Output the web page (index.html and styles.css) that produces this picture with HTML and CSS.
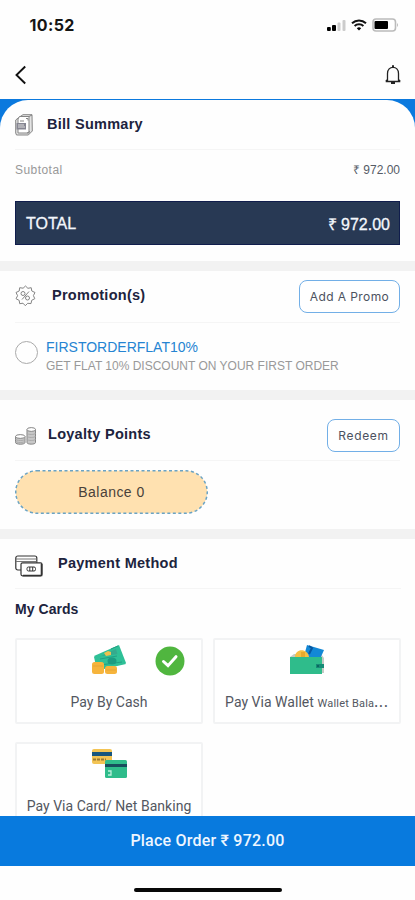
FILE: index.html
```html
<!DOCTYPE html>
<html lang="en">
<head>
<meta charset="utf-8">
<title>Bill Summary</title>
<link rel="stylesheet" href="styles.css">
</head>
<body>
<div class="screen">
  <header class="status">
    <span class="time">10:52</span>
    <div class="status-icons">
      <svg width="19" height="13" viewBox="0 0 19 13"><rect x="0" y="8" width="3.8" height="4" rx="1"/><rect x="5" y="6" width="4" height="6" rx="1"/><rect class="dim" x="10.5" y="3.500" width="3" height="8.500" rx="1"/><rect class="dim" x="15.500" y="1" width="3" height="11" rx="1"/></svg>
      <svg class="wifi" width="16" height="12" viewBox="0 0 16 12"><path d="M1 4.200C5 .5 11 .5 15 4.200M3.600 7C6 4.700 10 4.700 12.400 7" fill="none" stroke="#111" stroke-width="2"/><path d="M5.800 9.200Q8 7.400 10.200 9.200L8 11.500Z"/></svg>
      <svg class="battery" width="27" height="14" viewBox="0 0 27 14"><rect x="1" y="1" width="22.500" height="12" rx="3" fill="#fff" stroke="#bbb" stroke-width="1.600"/><rect x="2.500" y="3" width="13.500" height="8" rx="1"/><path d="M25 5q2 2 0 4z" fill="#bbb"/></svg>
    </div>
  </header>
  <nav class="nav">
    <svg width="12" height="20" viewBox="0 0 12 20"><path d="M10.200 1.500L1.500 10l8.700 8.500" fill="none" stroke="#111" stroke-width="1.900"/></svg>
    <svg width="16" height="20" viewBox="0 0 16 20" fill="none" stroke="#222" stroke-width="1.300"><path d="M.7 16.500h14.600M2.500 16.500V8.500C2.500 4.500 5 2.300 8 2.300s5.500 2.200 5.500 6.200v8M.7 16.500l1.800-2M15.300 16.500l-1.800-2"/><path d="M8 .3v2M6 18h4" stroke-width="2"/></svg>
  </nav>
  <div class="backdrop">
  <main class="sheet">
    <section class="bill">
      <div class="head bill-head">
        <svg width="18" height="22" viewBox="0 0 18 22" fill="#fff" stroke="#858585" stroke-width="1"><path d="M4.500 3L8 .7h9L17.300 17l-4 4H1.500L.7 19V6z" fill="#e4e4e4"/><path d="M4.500 2.500h9.500V19H3V5zM14 2.500L17 1M12 19l3-1.500"/><path d="M5 7h4M11 4.500h2v2" /><rect x="1.500" y="9" width="9.500" height="6.500" fill="#858591" stroke="none"/><path d="M3 11h6M3 13h7" stroke="#ddd"/></svg>
        <h2>Bill Summary</h2>
      </div>
      <div class="subtotal"><span class="sub-label">Subtotal</span><span>₹ 972.00</span></div>
      <div class="total"><span>TOTAL</span><span>₹ 972.00</span></div>
    </section>
    <section class="promotions">
      <div class="head promo-head">
        <svg width="21" height="22" viewBox="0 0 21 22" fill="none" stroke="#858585" stroke-width="1"><path d="M10.500 1l2.400 2.300 3.300-.6.6 3.300 3.200 1.500-1.600 3.100 1.400 3.100-3.100 1.600-.7 3.300-3.300-.3-2.400 2.400-2.300-2.500-3.300.5-.5-3.300L1 13.700l1.600-3L1 7.500 4.200 6l.5-3.300 3.400.5z"/><path d="M7 14.500l7-8"/><circle cx="8" cy="8.500" r="2"/><circle cx="12.500" cy="13" r="2"/></svg>
        <h2>Promotion(s)</h2>
        <button>Add A Promo</button>
      </div>
      <div class="offer">
        <span class="radio"></span>
        <div><p class="code">FIRSTORDERFLAT10%</p><p class="desc">GET FLAT 10% DISCOUNT ON YOUR FIRST ORDER</p></div>
      </div>
    </section>
    <section class="loyalty">
      <div class="head loyalty-head">
        <svg width="21" height="18" viewBox="0 0 21 18" fill="#c7c7c7" stroke="#858585" stroke-width="1"><path d="M.5 9.500v6c0 2.300 9.500 2.300 9.500 0v-6"/><path d="M.5 12c0 2 9.500 2 9.500 0M.5 14c0 2 9.500 2 9.500 0" stroke="#aaa" fill="none"/><ellipse cx="5.250" cy="9.500" rx="4.750" ry="1.900" fill="#fff"/><path d="M12 2.500v13c0 2.200 8.500 2.200 8.500 0v-13"/><path d="M12 6c0 2 8.500 2 8.500 0M12 9c0 2 8.500 2 8.500 0M12 12c0 2 8.500 2 8.500 0" stroke="#aaa" fill="none"/><ellipse cx="16.250" cy="2.500" rx="4.250" ry="1.900" fill="#fff"/></svg>
        <h2>Loyalty Points</h2>
        <button>Redeem</button>
      </div>
      <div class="balance"><svg width="193" height="44"><rect x=".75" y=".75" width="191.500" height="42.500" rx="21.250" fill="#ffe1b0" stroke="#6aa3c4" stroke-width="1.500" stroke-dasharray="3 2.500"/></svg><span>Balance 0</span></div>
    </section>
    <section class="payment">
      <div class="head pay-head">
        <svg width="28" height="22" viewBox="0 0 28 22" fill="#fff" stroke="#333" stroke-width="1.200"><rect x=".8" y="1" width="21" height="14" rx="2"/><path d="M1 4h20.500M1 6.500h20.500" stroke="#777"/><rect x="6" y="7.800" width="21" height="13" rx="1.500"/><path d="M26.500 9v11.500H8" fill="none" stroke-width="1.600"/><rect x="12" y="12" width="8.500" height="4" rx="1.500" stroke-width="1"/><path d="M14.800 12v4M17.700 12v4" stroke-width="1"/></svg>
        <h2>Payment Method</h2>
      </div>
      <h3>My Cards</h3>
      <div class="cards">
        <div class="card">
          <svg width="36" height="32" viewBox="0 0 36 32"><path d="M3 12L28 1l7 18-23 5z" fill="#2fc097"/><path d="M6 14L25 5l2 7-17 9z" fill="#35aa8d"/><path d="M3 13l25-3 7 10-22 5-8-3z" fill="#2fc097"/><path d="M9 15l17-3M9 21l22-3M20 5l7-3" stroke="#22a084" stroke-width="1"/><ellipse cx="21" cy="17" rx="4.500" ry="3.500" fill="#1c9c82"/><path d="M13 9l4-2 3 1v3l-5 1z" fill="#efc04e"/><rect x="1" y="18" width="12" height="12" rx="2.500" fill="#f6b43c"/><rect x="14" y="22" width="12" height="8" rx="2.500" fill="#f6b43c"/><path d="M2 22h10M15 26h10" stroke="#e5a636"/></svg>
          <span class="label">Pay By Cash</span>
          <svg class="check" width="30" height="30" viewBox="0 0 30 30"><circle cx="15" cy="15" r="14.500" fill="#50b63f"/><path d="M8.500 15.500l4.500 4.200 8-9" fill="none" stroke="#fff" stroke-width="3" stroke-linecap="round"/></svg>
        </div>
        <div class="card">
          <svg width="36" height="32" viewBox="0 0 36 32"><path d="M1 13l4-3h27l3 4v15H1z" fill="#c4cbc5"/><path d="M18 1l17 5-4 9-16-3z" fill="#1388d6"/><path d="M20 2l3 2-3 6" fill="none" stroke="#0756a0" stroke-width="2"/><path d="M6 13c0-9 13-9 14 0z" fill="#f5c044"/><path d="M12 8h4v5h-4z" fill="#e7a92d"/><path d="M1 13h32v17H1z" fill="#2fbc8b"/><path d="M27 20h8v4h-8z" fill="#168b76"/><circle cx="29" cy="22" r="1" fill="#095d58"/></svg>
          <span class="label wallet">Pay Via Wallet <small>Wallet Bala</small><b>...</b></span>
        </div>
        <div class="card">
          <svg width="36" height="32" viewBox="0 0 36 32"><rect x="1" y="1" width="20" height="15" rx="2" fill="#f3c454"/><path d="M1 4h20v4H1z" fill="#17557d"/><path d="M2 11.500h13" stroke="#9c7931" stroke-width="2" stroke-dasharray="3 1"/><rect x="14" y="12" width="22" height="18" rx="1.500" fill="#2fbc8b"/><path d="M14 16h22v3H14z" fill="#174d5d"/><path d="M17 23h3v4h-3" fill="none" stroke="#bcefdc" stroke-width="1.300"/></svg>
          <span class="label">Pay Via Card/ Net Banking</span>
        </div>
      </div>
    </section>
  </main>
  </div>
  <div class="order">Place Order ₹ 972.00</div>
  <footer><span class="home"></span></footer>
</div>
</body>
</html>
```
FILE: styles.css
```css
* { box-sizing: border-box; }
body { margin: 0; background: #fff; font-family: "Liberation Sans", sans-serif; }
h2, h3, p { margin: 0; }
svg { display: block; flex: none; }
.screen { width: 415px; height: 900px; display: flex; flex-direction: column; overflow: hidden; background: #fefefe; }
.status { height: 50px; flex: none; display: flex; justify-content: space-between; padding: 15px 16px 0 29.500px; }
.time { font: 700 16px/21px Inter, sans-serif; color: #151515; letter-spacing: .4px; }
.status-icons { display: flex; height: 20px; align-items: center; }
.status-icons .dim { fill: #ccc; }
.wifi { margin-left: 5px; }
.battery { margin-left: 5px; }
.nav { height: 49px; flex: none; display: flex; justify-content: space-between; align-items: center; padding: 1px 14px 0 15px; }
.backdrop { flex: 1; min-height: 0; overflow: hidden; background: linear-gradient(#0b79de 60px, #fefefe 60px); }
.sheet { background: #fefefe; border-radius: 28px 28px 0 0; margin-top: 1px; }
.head { display: flex; align-items: center; border-bottom: 1px solid #f5f5f5; }
h2 { font-size: 14.500px; line-height: 20px; letter-spacing: .27px; color: #20233d; }
section { padding: 0 15px; }
.bill { height: 161px; }
.bill-head { height: 50px; gap: 14px; }
.bill-head h2 { margin-bottom: 1px; }
.subtotal { height: 51px; display: flex; justify-content: space-between; padding-top: 13px; font-size: 12px; line-height: 15px; color: #555b66; }
.sub-label { color: #999; letter-spacing: .45px; }
.total { height: 44px; display: flex; justify-content: space-between; align-items: center; padding: 2px 9px 0 10px; background: #283954; border: 1px solid #101d4c; color: #f4f7fc; font-size: 16px; -webkit-text-stroke: .3px; }
.promotions, .loyalty, .payment { border-top: 10px solid #f2f2f2; }
.promotions { height: 129px; }
.promo-head { height: 52px; }
.promo-head svg { margin-bottom: 1px; }
.promo-head h2 { margin: 0 0 4px 16px; }
button { margin: 0 0 0 auto; padding: 0; background: #fff; border: 1.500px solid #72afe7; border-radius: 8px; font: 400 12px Inter, sans-serif; letter-spacing: .7px; color: #4c5260; height: 33px; }
.promo-head button { width: 101px; letter-spacing: .4px; }
.offer { display: flex; gap: 8px; padding-top: 15px; }
.radio { width: 23px; height: 23px; border: 1px solid #aaa; border-radius: 50%; margin-top: 3px; }
.code { font-size: 14px; line-height: 18px; color: #2584d2; }
.desc { font-size: 12px; line-height: 20px; color: #999; }
.loyalty { height: 139px; }
.loyalty-head { height: 61px; padding-top: 11px; }
.loyalty-head h2 { margin: 0 0 3px 12px; }
.loyalty-head button { width: 73px; }
.balance { display: grid; place-items: center; margin-top: 9px; width: 193px; height: 44px; color: #49413a; font-size: 14px; letter-spacing: .45px; }
.balance > * { grid-area: 1 / 1; }
.payment { padding-right: 14px; }
.pay-head { height: 50px; }
.pay-head h2 { margin: 0 0 2px 15px; }
.pay-head svg { margin-top: 4px; }
h3 { margin-top: 11px; font-size: 14px; line-height: 18px; letter-spacing: .05px; color: #20233d; }
.cards { display: grid; grid-template-columns: 188px 188px; gap: 18px 10px; margin-top: 20px; }
.card { height: 86px; border: 2px solid #f2f3f4; border-radius: 2px; display: flex; flex-direction: column; align-items: center; padding-top: 4px; position: relative; background: #fff; }
.label { font: 400 14px/18px Roboto, sans-serif; letter-spacing: .03px; color: #535761; margin-top: 17px; white-space: nowrap; }
.label small { font-size: 11px; letter-spacing: .2px; }
.label b { font-weight: 500; letter-spacing: 1px; }
.check { position: absolute; right: 16px; top: 6px; }
.order { height: 50px; flex: none; background: #087ade; color: #eef6ff; display: flex; align-items: center; justify-content: center; padding-bottom: 1px; font: 500 16px Roboto, sans-serif; letter-spacing: .22px; }
footer { height: 34px; flex: none; display: flex; justify-content: center; padding-top: 22px; }
.home { width: 148px; height: 4px; border-radius: 2px; background: #080808; }
```
